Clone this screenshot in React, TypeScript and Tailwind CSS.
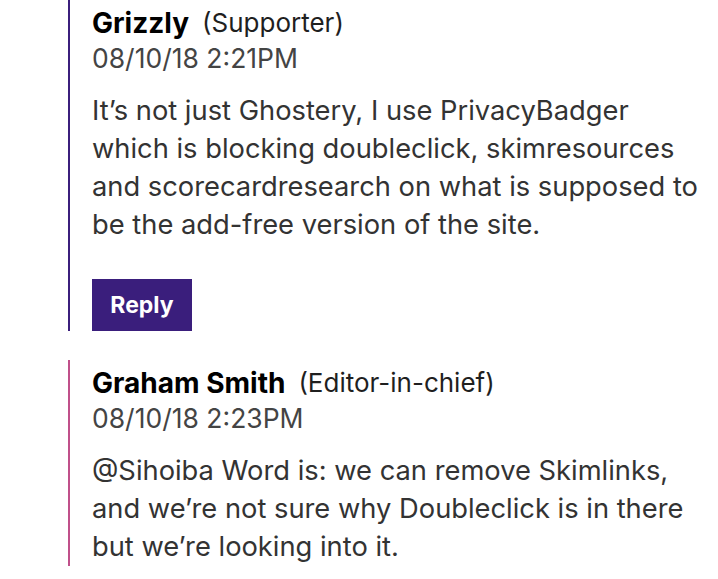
const font = { fontFamily: "Inter, 'Noto Sans', sans-serif" };

interface Comment {
  author: string;
  role: string;
  date: string;
  body: string[];
  accent: string;
  reply?: boolean;
}

const comments: Comment[] = [
  {
    author: "Grizzly",
    role: "(Supporter)",
    date: "08/10/18 2:21PM",
    body: [
      "It’s not just Ghostery, I use PrivacyBadger",
      "which is blocking doubleclick, skimresources",
      "and scorecardresearch on what is supposed to",
      "be the add-free version of the site.",
    ],
    accent: "border-[#3b1f7c]",
    reply: true,
  },
  {
    author: "Graham Smith",
    role: "(Editor-in-chief)",
    date: "08/10/18 2:23PM",
    body: [
      "@Sihoiba Word is: we can remove Skimlinks,",
      "and we’re not sure why Doubleclick is in there",
      "but we’re looking into it.",
    ],
    accent: "border-[#c0508a]",
  },
];

function CommentBlock({ c }: { c: Comment }) {
  return (
    <div className={`border-l-2 ${c.accent} pl-[22px] pt-[5px]`}>
      <div className="flex h-[36px] items-center gap-[13px] leading-[36px]">
        <span className="text-[28px] font-bold text-black">{c.author}</span>
        <span className="text-[26px] text-[#1f1f1f]">{c.role}</span>
      </div>
      <div className="h-[35px] text-[26.5px] leading-[35px] text-[#444]">
        {c.date}
      </div>
      <div className="mt-4 text-[27.3px] leading-[38px] text-[#333]">
        {c.body.map((line, i) => (
          <div key={i} className="h-[38px] whitespace-nowrap">
            {line}
          </div>
        ))}
      </div>
      {c.reply && (
        <button className="mt-[35px] flex h-[52px] w-[100px] items-center justify-center bg-[#3a1e7c] text-[23px] font-bold text-white">
          Reply
        </button>
      )}
    </div>
  );
}

export default function App() {
  return (
    <div
      className="flex h-[579px] w-[718px] flex-col gap-[29px] overflow-hidden bg-white pl-[68px]"
      style={font}
    >
      {comments.map((c, i) => (
        <CommentBlock key={i} c={c} />
      ))}
    </div>
  );
}
